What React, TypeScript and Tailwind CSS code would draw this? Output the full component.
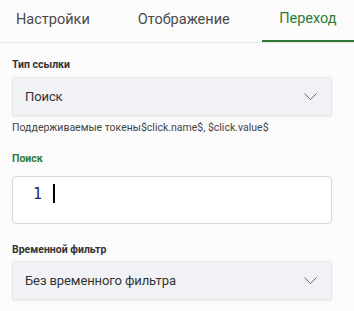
import React from 'react';

const font = { fontFamily: 'Roboto, "Noto Sans", sans-serif' };

function Chevron() {
  return (
    <svg width="13" height="7" viewBox="0 0 13 7" fill="none" className="text-[#666a70]">
      <path d="M0.5 0.5l6 6 6-6" stroke="currentColor" strokeWidth="1" />
    </svg>
  );
}

function Select({ value }: { value: string }) {
  return (
    <div className="flex h-[39px] items-center justify-between rounded-[2px] border border-[#e3e5e8] bg-[#f1f2f5] pl-[12px] pr-[14px] shadow-[0_1px_1px_rgba(0,0,0,0.06)]">
      <span className="text-[13px] tracking-[-0.1px] text-[#333]">{value}</span>
      <Chevron />
    </div>
  );
}

export default function App() {
  const tabs = ['Настройки', 'Отображение', 'Переход'];

  return (
    <div className="h-[311px] w-[354px] overflow-hidden bg-[#fbfbfc]" style={font}>
      <div className="flex h-[43px] gap-4 border-b border-[#e6e8eb]">
        {tabs.map((tab, i) => (
          <div
            key={tab}
            className={
              i === 2
                ? 'flex flex-1 items-center justify-center border-b-2 border-[#2f7a36] pb-[2px] text-[14.5px] text-[#2f7a36]'
                : 'flex items-center px-4 pb-[2px] text-[14.5px] text-[#4a4a4a]'
            }
          >
            {tab}
          </div>
        ))}
      </div>

      <div className="px-3 pr-[22px]">
        <p className="mt-[15px] text-[10.5px] font-bold leading-[14px] text-[#333]">Тип ссылки</p>
        <div className="mt-[5px]">
          <Select value="Поиск" />
        </div>
        <p className="mt-[4px] text-[10.5px] leading-[16px] text-[#444]">
          Поддерживаемые токены$click.name$, $click.value$
        </p>

        <p className="mt-[16px] text-[10.5px] font-bold leading-[14px] text-[#2f7a36]">Поиск</p>
        <div className="mt-[10px] h-[48px] rounded-[4px] border border-[#d5d7da] bg-white">
          <div className="flex items-center pt-[7px]">
            <span
              className="ml-[20px] text-[15px] leading-[18px] text-[#1c2a6b]"
              style={{ fontFamily: '"DejaVu Sans Mono", monospace' }}
            >
              1
            </span>
            <span className="ml-[11px] h-[19px] w-[2px] bg-black" />
          </div>
        </div>

        <p className="mt-[19px] text-[10.5px] font-bold leading-[14px] text-[#333]">Временной фильтр</p>
        <div className="mt-[4px]">
          <Select value="Без временного фильтра" />
        </div>
      </div>
    </div>
  );
}
